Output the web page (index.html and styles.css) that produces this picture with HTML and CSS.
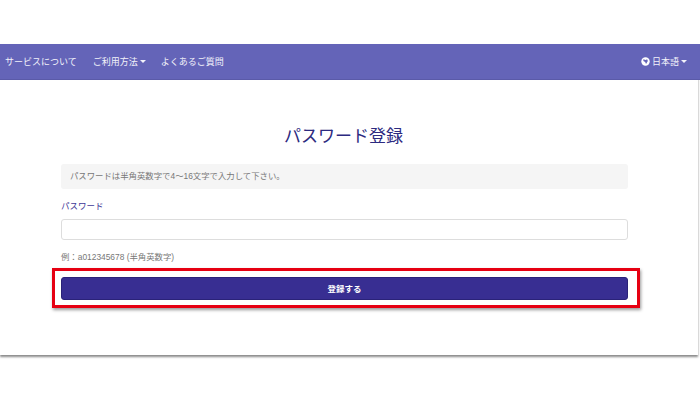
FILE: index.html
```html
<!DOCTYPE html>
<html lang="ja">
<head>
<meta charset="utf-8">
<title>パスワード登録</title>
<link rel="stylesheet" href="styles.css">
</head>
<body>
<div class="shot">
  <nav class="navbar">
    <ul class="nav-list">
      <li>サービスについて</li>
      <li>ご利用方法<span class="caret"></span></li>
      <li>よくあるご質問</li>
    </ul>
    <div class="lang">
      <svg class="globe" viewBox="0 0 10 10" width="9" height="9" aria-hidden="true"><circle cx="5" cy="5" r="4.7" fill="#fff"/><path d="M2.6 2.6 5.2 3.2 6.8 2.4 7.6 4.4 5.6 7.8 4.6 5.6 2.6 4.4Z" fill="#6464b8"/></svg>
      <span>日本語</span><span class="caret caret-lang"></span>
    </div>
  </nav>
  <main class="content">
    <h1 class="title">パスワード登録</h1>
    <p class="notice">パスワードは半角英数字で4～16文字で入力して下さい。</p>
    <label class="field-label" for="pw">パスワード</label>
    <input class="field-input" id="pw" type="password">
    <p class="hint">例：a012345678 (半角英数字)</p>
    <div class="highlight">
      <button class="submit" type="button">登録する</button>
    </div>
  </main>
</div>
</body>
</html>
```
FILE: styles.css
```css
* { box-sizing: border-box; }
html, body { margin: 0; height: 100%; background: #fff; overflow: hidden; }
body {
  padding-top: 44px;
  font-family: "Liberation Sans", "Noto Sans CJK JP", sans-serif;
}
.shot {
  width: 698px;
  height: 311px;
  background: #fff;
  box-shadow: 0 2px 2px rgba(60, 60, 60, .6);
}
.navbar {
  width: 700px;
  height: 36px;
  background: #6464b8;
  border-bottom: 1px solid #5a5aa8;
  display: flex;
  align-items: center;
  justify-content: space-between;
  padding: 0 13px 1px 5px;
  color: #f2f2fa;
  font-size: 9px;
}
.nav-list {
  list-style: none;
  display: flex;
  gap: 15px;
  margin: 0;
  padding: 0;
}
.nav-list li:first-child { margin-right: 1px; }
.caret {
  display: inline-block;
  width: 0;
  height: 0;
  margin-left: 2px;
  vertical-align: 2px;
  border-top: 3px solid #f2f2fa;
  border-left: 3px solid transparent;
  border-right: 3px solid transparent;
}
.lang { display: flex; align-items: center; gap: 2px; }
.caret-lang { margin-left: 0; }
.globe { display: block; }
.content {
  padding: 45px 0 0 61px;
  width: 628px;
}
.title {
  margin: 0 0 15px;
  padding-right: 2px;
  text-align: center;
  font-size: 17px;
  line-height: 24px;
  font-weight: 400;
  color: #2c2a80;
}
.notice {
  margin: 0 0 11px;
  height: 25px;
  padding: 0 9px;
  line-height: 25px;
  background: #f5f5f5;
  border-radius: 3px;
  color: #777;
  font-size: 8.4px;
}
.field-label {
  display: block;
  margin-bottom: 6px;
  font-size: 8.5px;
  line-height: 13px;
  color: #3f3a98;
}
.field-input {
  display: block;
  width: 100%;
  height: 21px;
  background: #fff;
  border: 1px solid #ddd;
  border-radius: 3px;
  outline: none;
}
.hint {
  margin: 11px 0 0;
  font-size: 8.4px;
  line-height: 13px;
  color: #777;
}
.highlight {
  margin: 4px -12px 0 -9px;
  padding: 6px 9px 5px 6px;
  border: 3px solid #e60012;
  box-shadow: 1px 2px 3px rgba(0, 0, 0, .4);
}
.submit {
  display: block;
  width: 567px;
  height: 23px;
  padding: 0 0 2px;
  background: #382e92;
  border: 1px solid #2a2278;
  border-radius: 3px;
  color: #fff;
  font: 700 8.5px "Liberation Sans", "Noto Sans CJK JP", sans-serif;
}
```
